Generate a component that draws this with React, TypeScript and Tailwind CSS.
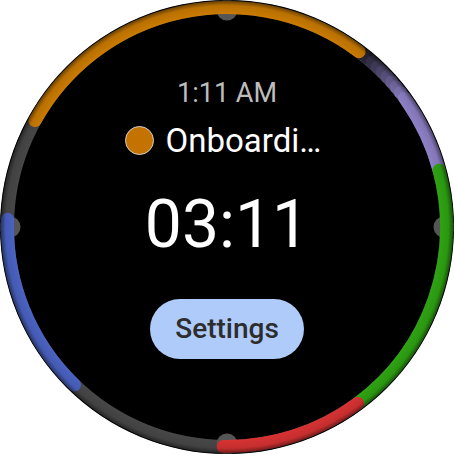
const C = 227;

function pt(r: number, deg: number) {
  const a = (deg * Math.PI) / 180;
  return [C + r * Math.sin(a), C - r * Math.cos(a)];
}

function arc(r: number, from: number, to: number) {
  let sweep = to - from;
  if (sweep < 0) sweep += 360;
  const [x1, y1] = pt(r, from);
  const [x2, y2] = pt(r, from + sweep);
  const large = sweep > 180 ? 1 : 0;
  return `M ${x1} ${y1} A ${r} ${r} 0 ${large} 1 ${x2} ${y2}`;
}

const R = 219.5;
const W = 13;

const ARCS: { from: number; to: number; color: string }[] = [
  { from: 299, to: 37, color: '#c97a00' },
  { from: 55, to: 75, color: '#8d80c6' },
  { from: 75, to: 143.5, color: '#2ea312' },
  { from: 143.5, to: 181, color: '#d63232' },
  { from: 224, to: 272, color: '#4a62c2' },
];

function mix(t: number) {
  const from = [14, 14, 18];
  const to = [141, 128, 198];
  const c = from.map((f, i) => Math.round(f + (to[i] - f) * t));
  return `rgb(${c[0]},${c[1]},${c[2]})`;
}

function Ring() {
  // trail of fading blobs between the orange and purple arcs
  const trail = [];
  for (let i = 0; i <= 10; i++) {
    const deg = 36 + i * 1.8;
    const [x, y] = pt(R, deg);
    trail.push(<circle key={i} cx={x} cy={y} r={W / 2} fill={mix(i / 10)} />);
  }
  return (
    <svg width="454" height="454" viewBox="0 0 454 454" className="absolute inset-0">
      <defs>
        <radialGradient id="shade" cx={C} cy={C} r={227} gradientUnits="userSpaceOnUse">
          <stop offset="0.94" stopColor="#000" stopOpacity="0" />
          <stop offset="0.975" stopColor="#000" stopOpacity="0.08" />
          <stop offset="1" stopColor="#000" stopOpacity="0.55" />
        </radialGradient>
      </defs>
      <circle cx={C} cy={C} r={R} fill="none" stroke="#474747" strokeWidth={W} />
      {[0, 90, 180, 270].map((d) => {
        const [x, y] = pt(217, d);
        return <circle key={d} cx={x} cy={y} r={10.5} fill="#555555" />;
      })}
      {trail}
      {ARCS.map((a) => (
        <path key={a.from} d={arc(R, a.from, a.to)} fill="none" stroke={a.color} strokeWidth={W} strokeLinecap="round" />
      ))}
      <circle cx={C} cy={C} r={227} fill="url(#shade)" />
    </svg>
  );
}

export default function App() {
  return (
    <div className="h-[454px] w-[454px] bg-white">
      <div
        className="relative flex h-[454px] w-[454px] flex-col items-center overflow-hidden rounded-full bg-black pt-[80px]"
        style={{ fontFamily: 'Roboto, "Noto Sans", sans-serif' }}
      >
        <Ring />
        <div className="relative text-[27px] leading-none text-[#bdbdbd]">1:11 AM</div>
        <div className="relative mt-[17px] mr-[8px] flex h-[33px] items-center gap-[12px]">
          <span className="h-[29px] w-[29px] rounded-full border-[1.5px] border-[#cfcfcf] bg-[#c47300]" />
          <span className="text-[33px] leading-none text-white">Onboardi…</span>
        </div>
        <div className="relative mt-[35px] text-[66px] leading-none text-white">03:11</div>
        <button
          type="button"
          className="relative mt-[41px] h-[60px] w-[154px] rounded-full bg-[#aecbfa] text-[28px] font-medium text-[#2d2d2d]"
        >
          Settings
        </button>
      </div>
    </div>
  );
}
